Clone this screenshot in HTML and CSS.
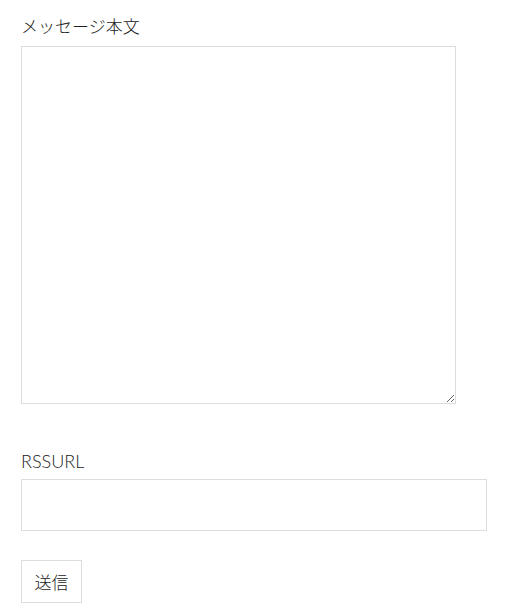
FILE: index.html
```html
<!DOCTYPE html>
<html lang="ja">
<head>
<meta charset="utf-8">
<link rel="stylesheet" href="styles.css">
</head>
<body>
<form class="form">
  <div class="field">
    <label class="label">メッセージ本文</label>
    <textarea class="textarea"></textarea>
  </div>
  <div class="field field-url">
    <label class="label label-latin">RSSURL</label>
    <input class="input" type="text">
  </div>
  <div class="actions">
    <button class="button" type="button">送信</button>
  </div>
</form>
</body>
</html>
```
FILE: styles.css
```css
html, body {
  margin: 0;
  padding: 0;
  background: #ffffff;
}
body {
  font-family: "Lato", "Noto Sans CJK JP", sans-serif;
  color: #222222;
  font-size: 17px;
}
.form {
  padding: 14px 0 0 21px;
  display: flex;
  flex-direction: column;
}
.field {
  display: flex;
  flex-direction: column;
  align-items: flex-start;
}
.label {
  font-size: 17px;
  font-weight: 300;
  line-height: 26px;
  margin-bottom: 6px;
}
.label-latin {
  font-size: 18px;
}
.textarea {
  box-sizing: border-box;
  width: 435px;
  height: 358px;
  border: 1px solid #dddddd;
  margin: 0;
  padding: 4px;
  resize: both;
  font: inherit;
}
.field-url {
  margin-top: 44px;
}
.field-url .label {
  margin-bottom: 5px;
}
.input {
  box-sizing: border-box;
  width: 466px;
  height: 52px;
  border: 1px solid #dddddd;
  margin: 0;
  padding: 4px 8px;
  font: inherit;
}
.actions {
  margin-top: 29px;
}
.button {
  box-sizing: border-box;
  width: 61px;
  height: 43px;
  background: #ffffff;
  border: 1px solid #dddddd;
  color: #222222;
  font-family: "Noto Sans CJK JP", sans-serif;
  font-size: 17px;
  font-weight: 300;
  padding: 0;
  margin: 0;
}
```
